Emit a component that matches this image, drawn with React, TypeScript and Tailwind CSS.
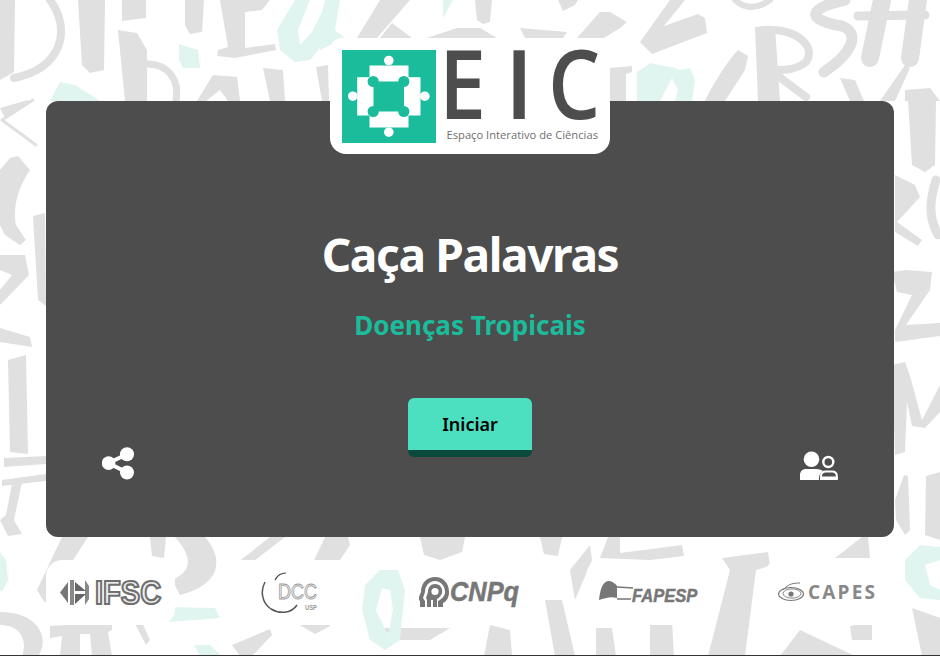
const G = "#e0e0e0";
const M = "#e0f5f0";

// Brush-lettering backdrop: filled shapes, then brush lines [path, width]
const grayFill = [
  "M0 0 L15 0 L14 72 L0 80 Z",
  "M78 0 L105 0 L104 70 L90 73 L82 65 Z",
  "M122 0 L146 0 L146 18 L122 21 Z",
  "M185 0 L204 0 L202 32 L190 34 L185 25 Z",
  "M220 0 L270 0 L262 10 L245 12 L245 48 L275 44 L276 50 L235 58 L217 56 L218 50 L228 47 Z",
  "M118 30 L137 33 L147 50 L147 101 L125 101 Z",
  "M197 101 L213 75 L237 77 L240 101 L228 101 L220 90 L206 101 Z",
  "M263 68 L283 70 L285 101 L270 101 Z",
  "M316 67 L328 65 L329 101 L322 101 Z",
  "M0 108 L28 100 L30 103 L5 118 Z",
  "M380 0 L410 0 L377 38 L357 38 Z M392 23 L412 38 L380 38 Z",
  "M475 0 L492 0 L490 22 L483 24 L477 20 Z",
  "M558 0 L578 0 L575 5 L563 11 Z",
  "M427 38 L457 28 L480 28 L497 38 Z",
  "M520 28 L567 32 L563 38 L525 38 Z",
  "M577 38 L600 12 L610 12 L627 22 L620 28 L604 38 Z",
  "M670 0 L685 0 L664 26 L698 14 L705 18 L707 33 L652 54 L640 42 Z",
  "M755 27 L775 27 L780 101 L758 101 Z",
  "M705 101 C715 80 730 58 738 50 L748 56 L745 70 L725 101 Z",
  "M920 100 L908 100 L912 165 L925 172 L935 165 L936 100 Z",
  "M610 68 L632 66 L632 72 L626 74 L626 101 L610 101 Z",
  "M840 78 L855 80 L864 101 L850 101 Z M905 65 L910 68 L895 101 L880 101 Z",
  "M905 90 L930 88 L940 101 L905 101 Z",
  "M10 158 L18 156 L30 170 C20 185 12 205 16 225 L26 240 L20 245 L5 235 L0 225 L0 170 Z",
  "M33 216 L45 213 L46 306 L38 300 Z",
  "M0 255 L25 255 L29 275 L0 305 L0 290 L12 275 L0 270 Z",
  "M0 328 L30 337 L32 347 L0 342 Z",
  "M8 360 L26 355 L28 454 L10 452 Z",
  "M4 458 L46 456 L46 464 L4 467 Z M2 480 L46 474 L46 481 L2 486 Z",
  "M12 484 L22 482 L14 520 L22 534 L8 536 L0 520 L6 515 Z",
  "M895 175 L915 185 L920 197 L897 222 L922 240 L918 246 L895 232 Z",
  "M892 272 L906 270 L932 272 L930 290 L906 325 L940 323 L940 336 L895 342 L895 330 L912 295 L897 292 Z",
  "M892 365 L905 362 L910 376 L922 420 L940 385 L940 412 L925 428 L912 426 L907 402 L905 452 L895 455 Z",
  "M895 500 L904 475 L908 476 L910 530 L905 535 L896 520 Z M926 476 L940 472 L940 540 L925 535 Z",
  "M62 537 L88 537 L45 603 L37 590 Z",
  "M150 537 L166 537 L164 558 L152 556 Z",
  "M175 537 L205 537 C225 560 220 585 180 595 L172 580 C190 572 195 560 175 537 Z",
  "M228 570 L270 537 L285 537 L232 578 Z",
  "M300 590 L325 537 L348 537 L350 545 L332 572 Z",
  "M420 537 L465 537 L462 552 L440 560 L424 555 Z",
  "M0 612 C40 612 50 640 38 656 L22 656 C28 640 20 625 0 625 Z",
  "M50 626 L112 622 L112 630 L108 632 L112 656 L92 656 L90 634 L80 634 L80 656 L60 656 L62 636 L50 638 Z",
  "M132 618 L140 618 L150 640 L146 645 Z",
  "M232 645 L270 629 L272 635 L252 656 L240 656 Z",
  "M298 624 L332 618 L330 626 L315 634 Z",
  "M380 628 L450 628 L430 640 L400 640 Z",
  "M540 537 L562 537 L558 556 L544 554 Z",
  "M608 537 L620 537 L620 553 L682 545 L684 556 L650 560 L600 558 Z",
  "M722 558 L768 552 L770 566 L756 570 L745 656 L708 656 L730 570 Z",
  "M570 570 L590 545 L592 560 L575 600 Z",
  "M545 600 L562 600 L575 656 L555 656 Z",
  "M490 625 L510 630 L512 656 L484 656 Z",
  "M596 628 L612 628 L616 656 L596 656 Z M650 620 L672 620 L674 656 L650 656 Z",
  "M780 656 L800 630 L855 656 Z",
  "M850 626 L872 622 L872 640 L852 640 Z",
  "M835 558 L862 537 L868 537 L870 558 Z",
  "M912 608 L940 618 L940 656 L922 656 Z",
];
const grayLine: [string, number][] = [
  ["M50 0 C72 30 62 68 14 78", 8],
  ["M147 64 C168 64 180 80 176 101", 7],
  ["M735 0 C745 9 757 9 770 0", 6],
  ["M845 0 C808 8 805 20 842 26 C862 34 850 55 824 72", 11],
  ["M858 16 L925 15", 9], ["M882 0 L870 58", 18], ["M918 0 L910 58", 18],
  ["M762 30 C800 28 816 48 806 62 C796 70 785 70 775 70", 8],
  ["M778 76 L806 97", 8],
  ["M33 100 L2 120 L36 145", 3],
  ["M936 180 C928 205 930 220 938 235", 9],
];
const mintFill = [
  "M179 44 L198 50 L200 68 L183 68 L179 60 Z",
  "M50 101 L60 82 L75 85 L100 101 Z",
  "M277 30 L295 0 L340 0 L335 30 L310 60 L295 62 L280 50 Z M300 45 L312 32 L322 12 L325 0 L310 0 L298 30 Z",
  "M443 0 L453 0 L443 18 Z",
  "M320 36 L335 30 L345 38 L320 50 Z",
  "M637 72 L650 63 L675 68 L680 70 L690 68 L695 80 L692 101 L637 101 Z M660 101 L672 78 L678 90 L675 101 Z",
  "M0 552 L6 560 L8 580 L2 592 L0 590 Z",
  "M165 607 L215 608 L220 618 L168 622 Z",
  "M194 645 L210 645 L222 656 L200 656 Z",
  "M380 570 L398 570 L405 590 L400 640 L385 650 L370 640 L362 610 L365 585 Z M382 588 L376 610 L388 635 L393 610 L390 590 Z",
  "M905 560 L920 545 L940 547 L940 600 L920 598 L905 580 Z M925 565 L930 585 L940 590 L940 560 Z",
];

function Backdrop() {
  return (
    <svg className="absolute inset-0" width="940" height="656" viewBox="0 0 940 656" fill="none" strokeLinecap="round" strokeLinejoin="round" aria-hidden="true">
      {grayFill.map((d, i) => <path key={i} d={d} fill={G} />)}
      {grayLine.map(([d, w], i) => <path key={i} d={d} stroke={G} strokeWidth={w} />)}
      {mintFill.map((d, i) => <path key={i} d={d} fill={M} fillRule="evenodd" />)}
    </svg>
  );
}

function PuzzleMark() {
  return (
    <svg width="94" height="93" viewBox="341.5 49.5 94 93" className="shrink-0">
      <rect x="341.5" y="49.5" width="94" height="93" fill="#1abc9c" />
      <g fill="#fff">
        <rect x="369" y="65" width="39" height="62" />
        <rect x="356.7" y="76.7" width="63.3" height="38.3" />
        <circle cx="388.3" cy="60" r="4.8" /><circle cx="388.3" cy="131.7" r="4.8" />
        <circle cx="352.3" cy="95.7" r="4.8" /><circle cx="424.3" cy="95.7" r="4.8" />
      </g>
      <g fill="#1abc9c">
        <rect x="373" y="81" width="30.5" height="30" />
        <circle cx="372.7" cy="81" r="5.6" /><circle cx="403.3" cy="81" r="5.6" />
        <circle cx="372.7" cy="111" r="5.6" /><circle cx="403.3" cy="111" r="5.6" />
      </g>
    </svg>
  );
}

function EicLogo() {
  return (
    <div className="flex h-[116px] w-[280px] rounded-b-2xl rounded-t-xl bg-white pl-[11.5px] pt-[11.5px]">
      <PuzzleMark />
      <div className="ml-[3px] flex flex-col">
        <div className="mt-[-3px] flex h-[69px] font-['Open_Sans',sans-serif] text-[96px] font-semibold leading-[69px] text-[#4d4d4d]">
          <span className="w-[66px] origin-left scale-x-[0.88]">E</span>
          <span className="w-[43px]">I</span>
          <span className="origin-left scale-x-[0.86]">C</span>
        </div>
        <p className="ml-[8px] mt-[12px] whitespace-nowrap font-['Open_Sans',sans-serif] text-[11.2px] leading-[14px] text-[#6f6f6f]">Espaço Interativo de Ciências</p>
      </div>
    </div>
  );
}

function ShareIcon() {
  return (
    <svg width="32" height="33" viewBox="102 447.5 32 33" fill="#fff" stroke="#fff">
      <path d="M127 454.7 L108.5 463.5 L127 473" fill="none" strokeWidth="4" />
      <g stroke="none">
        <circle cx="127" cy="454.7" r="7" /><circle cx="108.6" cy="463.6" r="6.8" /><circle cx="127" cy="473" r="7" />
      </g>
    </svg>
  );
}

function UsersIcon() {
  return (
    <svg width="38" height="29" viewBox="800 449 38 29">
      <circle cx="811.5" cy="457.3" r="7.8" fill="#fff" />
      <path d="M800 478 L800 473 C800 469 803 467 806 467 L816 467 C819 467 822 468 823 469 C820 471 819 473 819 478 Z" fill="#fff" />
      <circle cx="828.3" cy="460" r="5" fill="none" stroke="#fff" strokeWidth="2.4" />
      <path d="M821 477 L821 474 C821 471 823 469.5 826 469.5 L832 469.5 C835 469.5 836.8 471 836.8 474 L836.8 477" fill="none" stroke="#fff" strokeWidth="2" />
      <rect x="820" y="474.5" width="17.8" height="3.5" fill="#fff" />
    </svg>
  );
}

function Ifsc() {
  return (
    <svg width="102" height="40" viewBox="0 -5 102 40">
      <path d="M0 14.5 L8 4 L8 25 Z" fill="#777" />
      <path d="M10 2 L14 2 L14 27 L10 27 Z M25 2 L29 8 L29 21 L25 27 Z" fill="#888" />
      <path d="M15 4 L26 13 L15 13 Z" fill="#666" /><path d="M15 26 L26 16 L15 16 Z" fill="#666" />
      <text transform="translate(35 26) scale(0.88 1)" fontFamily="Liberation Sans, sans-serif" fontSize="33" fontWeight="700" fill="#eee" stroke="#6f6f6f" strokeWidth="2.2">IFSC</text>
    </svg>
  );
}

function Dcc() {
  return (
    <svg width="58" height="44" viewBox="0 0 58 44" fill="none">
      <path d="M25 2 C20 2 16 5 14 9" stroke="#444" strokeWidth="1.2" />
      <path d="M4 11 C-1 20 1 32 10 38 C18 43 30 43 36 34" stroke="#555" strokeWidth="1.5" />
      <text transform="translate(17 28) scale(0.82 1)" fontFamily="Liberation Sans, sans-serif" fontSize="22" fill="#f4f4f4" stroke="#999" strokeWidth="0.9">DCC</text>
      <text transform="translate(44 39) scale(0.78 1)" fontFamily="Liberation Sans, sans-serif" fontSize="7.5" fontWeight="700" fill="#999">USP</text>
    </svg>
  );
}

function Cnpq() {
  return (
    <svg width="102" height="34" viewBox="0 0 102 34">
      <path d="M1 31 L1 25 L-1 23 L2 16 C2 6 9 1 16 1 C24 1 30 7 30 16 C30 21 28 25 24 27 L24 31 L19 31 L19 25 C23 23 26 20 26 16 C26 9 21 5 16 5 C10 5 6 10 6 16 L4 22 L6 25 L6 31 Z" fill="#777" />
      <path d="M16 8 C21 8 24 12 23 17 C22 20 20 22 18 23 L18 31 L8 31 L8 24 L7 22 L9 16 C9 11 12 8 16 8 Z" fill="#777" />
      <circle cx="16" cy="15.5" r="3.6" fill="#fff" />
      <path d="M12 31 L12 24 L14 24 L14 31 Z" fill="#fff" />
      <text transform="translate(31 25) scale(0.94 1)" fontFamily="Liberation Sans, sans-serif" fontSize="27" fontWeight="700" fontStyle="italic" fill="#777" stroke="#777" strokeWidth="0.5">CNPq</text>
    </svg>
  );
}

function Fapesp() {
  return (
    <svg width="100" height="28" viewBox="0 -2 100 28">
      <path d="M0 19 C1 10 3 1 9 0 C13 0 16 2 18 5 L18 17 C12 15 6 17 0 19 Z" fill="#777" />
      <path d="M18 6 L34 7 M18 18 L32 18" fill="none" stroke="#777" strokeWidth="1.4" />
      <text transform="translate(33 21) scale(0.92 1)" fontFamily="Liberation Sans, sans-serif" fontSize="18" fontWeight="700" fontStyle="italic" fill="#777" stroke="#777" strokeWidth="0.5">FAPESP</text>
    </svg>
  );
}

function Capes() {
  return (
    <svg width="102" height="30" viewBox="0 -5 102 30" fill="none">
      <ellipse cx="13" cy="11" rx="12.5" ry="6.5" stroke="#777" strokeWidth="1.1" />
      <ellipse cx="14" cy="10.5" rx="9" ry="4.6" stroke="#777" strokeWidth="0.9" />
      <circle cx="13" cy="11" r="2.6" fill="#777" />
      <path d="M5 7 C10 1 15 0 22 0" stroke="#777" strokeWidth="1" />
      <text x="30" y="16" fontFamily="Open Sans, sans-serif" fontSize="19" fontWeight="700" fill="#888" letterSpacing="2.2">CAPES</text>
    </svg>
  );
}

const partners = [
  { key: "ifsc", w: "w-[129px]", node: <Ifsc /> },
  { key: "dcc", w: "w-[126px]", node: <Dcc /> },
  { key: "cnpq", w: "w-[130px]", node: <Cnpq /> },
  { key: "fapesp", w: "w-[126px]", node: <Fapesp /> },
  { key: "capes", w: "w-[130px]", node: <Capes /> },
];

export default function App() {
  return (
    <div className="relative h-[656px] w-[940px] overflow-hidden border-b border-[#333333] bg-white font-['Noto_Sans',sans-serif]">
      <Backdrop />
      <div className="relative flex flex-col px-[46px] pt-[101px]">
        <main className="relative flex h-[436px] flex-col items-center rounded-xl bg-[#4d4d4d] px-[56px] pb-[57px] pt-[122px]">
          <div className="absolute left-[284px] top-[-63px]">
            <EicLogo />
          </div>
          <h1 className="text-center text-[46px] font-bold leading-[62px] tracking-[-1.35px] text-white">Caça Palavras</h1>
          <h2 className="mt-[24px] text-center text-[26px] font-bold leading-[32px] text-[#1abc9c]">Doenças Tropicais</h2>
          <div className="mt-auto flex w-full items-end justify-between">
            <div className="w-[38px]"><ShareIcon /></div>
            <button className="mb-[23px] h-[59px] w-[124px] rounded-md border-b-[7px] border-[#0a4a3d] bg-[#4de0c0] text-[18px] font-semibold leading-none text-black">Iniciar</button>
            <UsersIcon />
          </div>
        </main>
        <footer className="mt-[23px] flex justify-between">
          {partners.map((p) => (
            <div key={p.key} className={`flex h-[65px] items-center justify-center rounded-2xl bg-white ${p.w}`}>
              {p.node}
            </div>
          ))}
        </footer>
      </div>
    </div>
  );
}
